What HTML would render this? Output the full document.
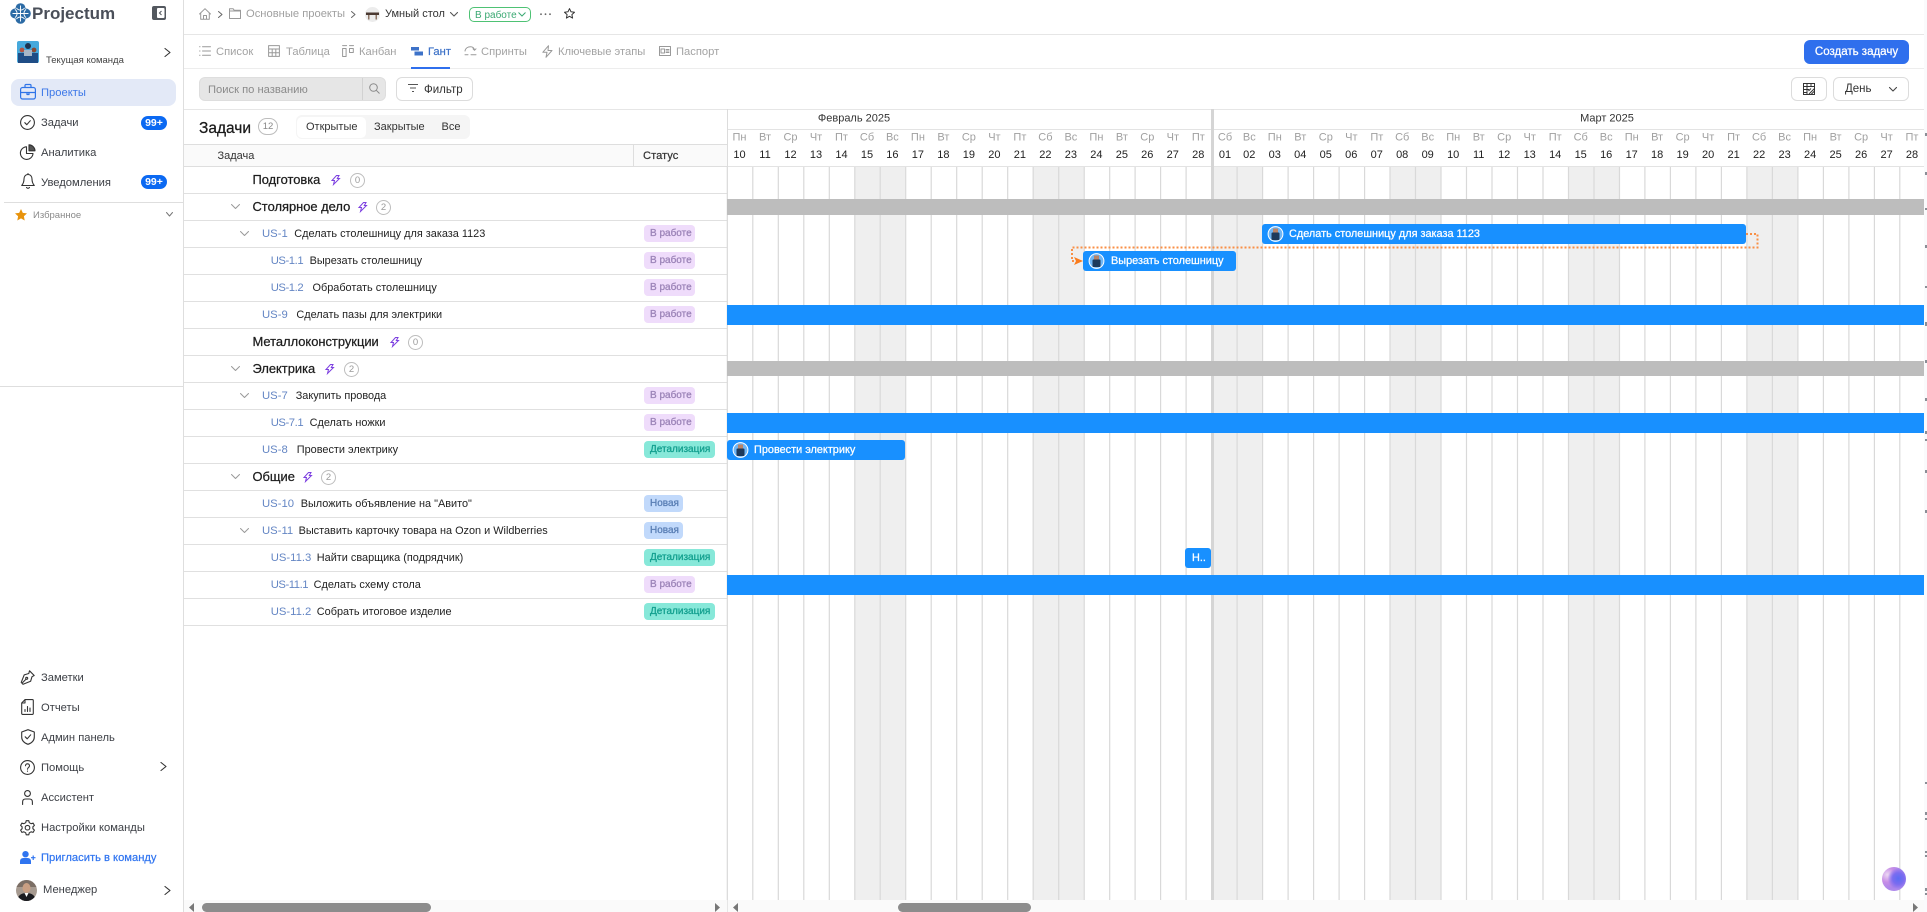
<!DOCTYPE html>
<html lang="ru">
<head>
<meta charset="utf-8">
<title>Projectum</title>
<style>
*{box-sizing:border-box}
html,body{margin:0;padding:0;width:1927px;height:912px;overflow:hidden;background:#fff;font-family:"Liberation Sans","Noto Sans CJK SC",sans-serif;color:#222}
.a{position:absolute}
.t{position:absolute;white-space:nowrap}
svg{position:absolute;overflow:visible;display:block}
.i{fill:none;stroke:#333;stroke-width:1.1;stroke-linecap:round;stroke-linejoin:round}
.g{fill:none;stroke:#999;stroke-width:1;stroke-linecap:round;stroke-linejoin:round}
.n{left:41px;font-size:11.2px;line-height:16px;color:#3c3f45;margin-top:1px}
.tab{font-size:11.2px;top:44px;line-height:16px;color:#a3a3a3}
.r{position:absolute;left:184px;width:543px;height:27px;border-bottom:1px solid #e0e0e0}
.r .t{line-height:26px;top:0}
.l{font-size:12.9px;color:#1d1d1d;-webkit-text-stroke:.25px #1d1d1d}
.x{font-size:10.9px;color:#222}
.d{font-size:11.3px;color:#6486c4}
.q{letter-spacing:-.45px}
.c{position:absolute;top:6px;width:15px;height:15px;border:1px solid #bdbdbd;border-radius:50%;font-size:9.5px;line-height:13px;text-align:center;color:#9a9a9a}
.s{position:absolute;left:460px;top:4px;height:17px;border-radius:4px;font-size:10px;line-height:17px;padding-left:6px;-webkit-text-stroke:.3px}
.w{width:51px;background:#efdcfb;color:#9c84b8}
.z{width:71px;background:#87e8d9;color:#13a08f}
.v{width:39px;background:#c1d9fb;color:#5a7fb5}
.b{position:absolute;height:20px;background:#1890ff;border-radius:3px;color:#fff;font-size:10.9px;line-height:21px;white-space:nowrap;-webkit-text-stroke:.25px #fff}
.f{left:727px;width:1197px;border-radius:0}
.k{position:absolute;left:5px;top:2px;width:17px;height:16px}
.btn{position:absolute;top:77px;height:24px;border:1px solid #dcdcdc;border-radius:6px;background:#fff}
</style>
</head>
<body>

<!-- right strip -->
<div class="a" style="left:1924px;top:0;width:3px;height:912px;background:#fafafc"></div>
<svg style="left:0;top:0" width="1927" height="912"><g fill="#8a8f96">
<rect x="1925" y="133" width="2" height="3"/><rect x="1925" y="172" width="2" height="3"/><rect x="1925" y="208" width="2" height="2"/><rect x="1925" y="245" width="2" height="3"/><rect x="1925" y="286" width="2" height="2"/><rect x="1925" y="322" width="2" height="4"/><rect x="1925" y="360" width="2" height="3"/><rect x="1925" y="398" width="2" height="3"/><rect x="1925" y="431" width="2" height="3"/><rect x="1925" y="439" width="2" height="2"/><rect x="1925" y="470" width="2" height="3"/><rect x="1925" y="510" width="2" height="3"/>
<rect x="1925" y="782" width="2" height="2"/><rect x="1925" y="812" width="2" height="3"/><rect x="1925" y="818" width="2" height="2"/><rect x="1925" y="851" width="2" height="2"/><rect x="1925" y="855" width="2" height="2"/><rect x="1925" y="888" width="2" height="3"/><rect x="1925" y="893" width="2" height="2"/>
</g></svg>

<!-- structural lines -->
<div class="a" style="left:183px;top:0;width:1px;height:912px;background:#dedede"></div>
<div class="a" style="left:184px;top:34px;width:1740px;height:1px;background:#e6e6e6"></div>
<div class="a" style="left:184px;top:68px;width:1740px;height:1px;background:#ededed"></div>
<div class="a" style="left:184px;top:109px;width:1740px;height:1px;background:#e6e6e6"></div>

<!-- ================= SIDEBAR ================= -->
<svg style="left:10px;top:3px" width="21" height="21" viewBox="0 0 22 22">
<g fill="#2c6ba5"><circle cx="11" cy="5.4" r="5.2"/><circle cx="11" cy="16.600" r="5.2"/><circle cx="5.4" cy="11" r="5.2"/><circle cx="16.600" cy="11" r="5.2"/><circle cx="11" cy="11" r="6"/></g>
<g fill="none" stroke="#fff" stroke-width="1" stroke-linecap="round"><path d="M11 3v16M3 11h16"/><path d="M7 5.500c2 2.500 6 2.500 8 0M7 16.500c2-2.500 6-2.500 8 0M5.500 7c2.500 2 2.500 6 0 8M16.500 7c-2.500 2-2.500 6 0 8"/></g>
</svg>
<div class="t" style="left:32px;top:2px;font-size:17px;line-height:24px;font-weight:700;color:#4a4f59">Projectum</div>
<svg style="left:152px;top:6px" width="14" height="14" viewBox="0 0 14 14"><rect width="14" height="14" rx="2" fill="#53585f"/><rect x="5" y="2" width="7.500" height="10" rx="1" fill="#fff"/><path d="M9.500 5L7.500 7l2 2" fill="none" stroke="#53585f" stroke-width="1.100"/></svg>

<svg style="left:17px;top:41px" width="22" height="22" viewBox="0 0 22 22">
<rect width="22" height="22" rx="2" fill="#46a9dc"/>
<circle cx="11" cy="5" r="3" fill="#1d3350"/><circle cx="5" cy="9" r="2.400" fill="#b5523f"/><circle cx="17" cy="9" r="2.400" fill="#8a4a34"/>
<rect x="1" y="12" width="20" height="10" fill="#1f4d86"/><rect x="7" y="9" width="8" height="6" fill="#a7b6c7"/>
</svg>
<div class="t" style="left:46px;top:54px;font-size:9.500px;line-height:14px;color:#444">Текущая команда</div>
<svg style="left:164px;top:48px" width="7" height="9"><path class="i" d="M1 .5l5 4-5 4"/></svg>

<div class="a" style="left:11px;top:79px;width:165px;height:27px;border-radius:8px;background:#e3e9f7"></div>
<svg style="left:20px;top:84px" width="16" height="16" viewBox="0 0 16 16"><g fill="none" stroke="#2f74e8" stroke-width="1.200" stroke-linejoin="round"><rect x=".6" y="3.500" width="14.800" height="11.500" rx="2"/><path d="M5 3.500V1.500q0-1 1-1h4q1 0 1 1v2M.6 8.500h14.800M7 8.500v2h2v-2"/></g></svg>
<div class="t n" style="top:84px;color:#3d78e8">Проекты</div>

<svg style="left:20px;top:114.500px" width="15" height="15" viewBox="0 0 15 15"><circle class="i" cx="7.500" cy="7.500" r="6.900"/><path class="i" d="M4.800 7.700l2 2 3.500-4"/></svg>
<div class="t n" style="top:114px">Задачи</div>
<div class="a" style="left:141px;top:116px;width:26px;height:14px;border-radius:7px;background:#0b69f2;color:#fff;font-size:10.500px;line-height:14px;text-align:center;font-weight:700">99+</div>

<svg style="left:20px;top:144px" width="16" height="16" viewBox="0 0 16 16"><path class="i" d="M6.500 2.800A6.300 6.300 0 1 0 13 9.500H6.500z"/><path class="i" d="M9 .8a6.200 6.200 0 0 1 6 6H9z" style="fill:#555"/></svg>
<div class="t n" style="top:144px">Аналитика</div>

<svg style="left:21px;top:173px" width="14" height="17" viewBox="0 0 14 17"><path class="i" d="M7 1.500C4.500 1.500 3 3.500 3 6c0 3.500-1 5-2.300 6.500h12.600C12 11 11 9.500 11 6c0-2.500-1.500-4.500-4-4.500zM5.500 14.500q1.500 1.500 3 0M7 .5v1"/></svg>
<div class="t n" style="top:174px">Уведомления</div>
<div class="a" style="left:141px;top:175px;width:26px;height:14px;border-radius:7px;background:#0b69f2;color:#fff;font-size:10.500px;line-height:14px;text-align:center;font-weight:700">99+</div>

<div class="a" style="left:4px;top:202px;width:179px;height:1px;background:#dedede"></div>
<svg style="left:15px;top:209px" width="12" height="12" viewBox="0 0 12 12"><path d="M6 0l1.800 3.900 4.200.5-3.100 2.900.8 4.200L6 9.400l-3.700 2.100.8-4.200L0 4.400l4.200-.5z" fill="#e8930c"/></svg>
<div class="t" style="left:33px;top:208.500px;font-size:9.500px;line-height:14px;color:#8a8a8a">Избранное</div>
<svg style="left:166px;top:212px" width="7" height="5"><path class="g" style="stroke:#777" d="M.5.5l3 3.500 3-3.500"/></svg>
<div class="a" style="left:0;top:386px;width:183px;height:1px;background:#dedede"></div>

<svg style="left:20px;top:670px" width="15" height="15" viewBox="0 0 15 15"><path class="i" d="M9.500.8l4.700 4.700-2.200 1.200-1.400 4.600-7.500 3-1.900-1.900 3-7.500 4.600-1.400zM2.200 13l3.500-3.500"/><circle class="i" cx="6.700" cy="8.300" r="1"/></svg>
<div class="t n" style="top:669px">Заметки</div>
<svg style="left:21px;top:699px" width="13" height="16" viewBox="0 0 13 16"><path class="i" d="M4 .6h7.300q1 0 1 1v12.800q0 1-1 1H1.700q-1 0-1-1V4zM4 .6V4H.7M4 12.500v-2M6.500 12.500V7.500M9 12.500v-3.500"/></svg>
<div class="t n" style="top:699px">Отчеты</div>
<svg style="left:21px;top:729px" width="14" height="16" viewBox="0 0 14 16"><path class="i" d="M7 .7l6.300 2.300v5c0 3.500-2.500 6-6.300 7.300C3.200 14 .7 11.500.7 8V3zM4.200 7.800l2 2 3.500-4"/></svg>
<div class="t n" style="top:729px">Админ панель</div>
<svg style="left:20px;top:759.500px" width="15" height="15" viewBox="0 0 15 15"><circle class="i" cx="7.500" cy="7.500" r="6.900"/><path class="i" d="M5.500 5.800c0-2.600 4-2.600 4 0 0 1.700-2 1.700-2 3.400M7.500 11v.3"/></svg>
<div class="t n" style="top:759px">Помощь</div>
<svg style="left:160px;top:762px" width="7" height="9"><path class="i" d="M1 .5l5 4-5 4"/></svg>
<svg style="left:22px;top:790px" width="11" height="15" viewBox="0 0 11 15"><circle class="i" cx="5.500" cy="3.500" r="2.900"/><path class="i" d="M.6 14.500v-2.500q0-3 3-3h3.800q3 0 3 3v2.500"/></svg>
<div class="t n" style="top:789px">Ассистент</div>
<svg style="left:20px;top:819.500px" width="15" height="15" viewBox="0 0 15 15"><path class="i" d="M6.200.7h2.600l.5 2 1.800 1 2-.6 1.300 2.300-1.500 1.400v1.900l1.500 1.400-1.300 2.300-2-.6-1.800 1-.5 2H6.200l-.5-2-1.800-1-2 .6L.6 10.100l1.500-1.400V6.800L.6 5.400l1.300-2.300 2 .6 1.800-1z"/><circle class="i" cx="7.500" cy="7.700" r="2.300"/></svg>
<div class="t n" style="top:819px">Настройки команды</div>
<svg style="left:20px;top:851px" width="16" height="13" viewBox="0 0 16 13"><circle cx="5.500" cy="3.200" r="3.200" fill="#2f74f0"/><path d="M0 13v-2.500q0-3.500 3.500-3.500h4q3.500 0 3.500 3.500V13z" fill="#2f74f0"/><path d="M13.200 4.500v4.500M11 6.700h4.500" stroke="#2f74f0" stroke-width="1.200" fill="none"/></svg>
<div class="t n" style="top:849px;color:#2f74f0;-webkit-text-stroke:.2px #2f74f0">Пригласить в команду</div>

<svg style="left:16px;top:880px" width="21" height="21" viewBox="0 0 21 21"><defs><clipPath id="mg"><circle cx="10.500" cy="10.500" r="10.500"/></clipPath></defs><g clip-path="url(#mg)"><rect width="21" height="21" fill="#a69a90"/><rect y="0" width="21" height="7" fill="#7b6e65"/><ellipse cx="10.500" cy="8" rx="4" ry="5" fill="#c99f83"/><path d="M1 21q1-8 9.500-8t9.500 8z" fill="#1b1c20"/><path d="M8.500 13l2 4 2-4z" fill="#fff"/></g></svg>
<div class="t n" style="left:43px;top:880.500px">Менеджер</div>
<svg style="left:164px;top:886px" width="7" height="9"><path class="i" d="M1 .5l5 4-5 4"/></svg>

<!-- ================= TOP BREADCRUMB ================= -->
<svg style="left:199px;top:8px" width="12" height="12" viewBox="0 0 12 12"><path class="g" d="M.5 6L6 .7 11.500 6M1.700 5v6.300h8.600V5M4.500 11.300V7.500h3v3.800"/></svg>
<svg style="left:218px;top:11px" width="5" height="7"><path class="g" style="stroke:#666" d="M.5.5l3.500 3-3.500 3"/></svg>
<svg style="left:229px;top:8px" width="12" height="11" viewBox="0 0 12 11"><path class="g" d="M.5 10.500V.8h3.700l1 1.500h6.300v8.200zM.5 3h11"/></svg>
<div class="t" style="left:246px;top:6px;font-size:11.200px;line-height:16px;color:#a0a0a0">Основные проекты</div>
<svg style="left:351px;top:11px" width="5" height="7"><path class="g" style="stroke:#666" d="M.5.5l3.500 3-3.500 3"/></svg>
<svg style="left:365px;top:7px" width="15" height="15" viewBox="0 0 15 15"><circle cx="7.500" cy="7.500" r="7.500" fill="#ececec"/><path d="M1 5.500h13v2.500H1z" fill="#4b3a32"/><path d="M3 8h1.500v4.500H3zM10.500 8H12v4.500h-1.500z" fill="#8e7666"/></svg>
<div class="t" style="left:385px;top:6px;font-size:11px;line-height:16px;color:#333">Умный стол</div>
<svg style="left:450px;top:12px" width="8" height="5"><path class="i" style="stroke:#555" d="M.5.5l3.500 3.500 3.500-3.500"/></svg>
<div class="a" style="left:469px;top:7px;width:62px;height:15px;border:1px solid #4ec274;border-radius:5px;background:#fff"></div>
<div class="t" style="left:475px;top:7.500px;font-size:10px;line-height:15px;color:#3aa872">В работе</div>
<svg style="left:518px;top:12px" width="8" height="5"><path fill="none" stroke="#3aa872" stroke-width="1" d="M.5.5l3.500 3.500 3.500-3.500"/></svg>
<svg style="left:540px;top:13px" width="11" height="3"><g fill="#666"><circle cx="1" cy="1.200" r=".9"/><circle cx="5.500" cy="1.200" r=".9"/><circle cx="10" cy="1.200" r=".9"/></g></svg>
<svg style="left:564px;top:8px" width="11" height="11" viewBox="0 0 11 11"><path class="i" style="stroke-width:1" d="M5.500.6l1.500 3.200 3.500.4-2.600 2.400.7 3.500-3.100-1.800-3.100 1.800.7-3.500L.5 4.200 4 3.800z"/></svg>

<!-- ================= TABS ================= -->
<svg style="left:199px;top:46px" width="12" height="10" viewBox="0 0 12 10"><path class="g" d="M3.500.8h8M3.500 5h8M3.500 9.200h8M.6.8h.4M.6 5h.4M.6 9.200h.4"/></svg>
<div class="t tab" style="left:216px">Список</div>
<svg style="left:268px;top:45px" width="12" height="12" viewBox="0 0 12 12"><path class="g" d="M.6.6h10.800v10.800H.6zM.6 4h10.800M.6 7.700h10.800M4.200 4v7.400M7.800 4v7.400"/></svg>
<div class="t tab" style="left:286px">Таблица</div>
<svg style="left:342px;top:45px" width="12" height="12" viewBox="0 0 12 12"><path class="g" d="M.6.6h4M7.500.6h4M.6 3.500h3.500v8H.6zM7.500 3.500h3.800v4H7.500z"/></svg>
<div class="t tab" style="left:359px">Канбан</div>
<svg style="left:411px;top:47px" width="12" height="9" viewBox="0 0 12 9"><path d="M0 0h8v3.500H0zM3.500 4.500H12V8.500H3.500z" fill="#3d72c8"/></svg>
<div class="t tab" style="left:428px;color:#3d72c8;-webkit-text-stroke:.2px #3d72c8">Гант</div>
<div class="a" style="left:411px;top:67px;width:39px;height:2px;background:#2f6fed"></div>
<svg style="left:464px;top:46px" width="13" height="11" viewBox="0 0 13 11"><path class="g" d="M1 5C1.500 2 4 .7 6.500.7S10 2 10.500 4M9 2.800L10.500 4.300 12 2.800M1 8.800h3M7 8.800h5"/></svg>
<div class="t tab" style="left:481px">Спринты</div>
<svg style="left:542px;top:45px" width="11" height="13" viewBox="0 0 11 13"><path class="g" d="M6.500.7L.8 7.300H5l-1 5 6-6.800H6z"/></svg>
<div class="t tab" style="left:558px">Ключевые этапы</div>
<svg style="left:659px;top:46px" width="12" height="10" viewBox="0 0 12 10"><path class="g" d="M.5.5h11v9H.5zM2 3h3.500v4H2zM7 3.500h3M7 5h3M7 6.500h3"/></svg>
<div class="t tab" style="left:676px">Паспорт</div>
<div class="a" style="left:1804px;top:40px;width:105px;height:24px;background:#2f6fed;border-radius:6px;color:#fff;font-size:11.500px;line-height:25px;text-align:center;-webkit-text-stroke:.25px #fff">Создать задачу</div>

<!-- ================= FILTER ROW ================= -->
<div class="a" style="left:199px;top:77px;width:187px;height:24px;background:#e6e6e6;border:1px solid #dedede;border-radius:6px"></div>
<div class="a" style="left:362px;top:78px;width:1px;height:22px;background:#d2d2d2"></div>
<div class="t" style="left:208px;top:82px;font-size:11.200px;line-height:16px;color:#8a8a8a">Поиск по названию</div>
<svg style="left:369px;top:83px" width="11" height="11" viewBox="0 0 11 11"><circle cx="4.500" cy="4.500" r="3.800" fill="none" stroke="#8a8a8a"/><path d="M7.300 7.300l3.200 3.200" stroke="#8a8a8a" fill="none"/></svg>
<div class="btn" style="left:396px;width:77px"></div>
<svg style="left:408px;top:84px" width="10" height="8" viewBox="0 0 10 8"><path d="M0 .5h10M2 4h6M4 7.500h2" stroke="#555" fill="none"/></svg>
<div class="t" style="left:424px;top:82px;font-size:11.500px;line-height:16px;color:#333">Фильтр</div>
<div class="btn" style="left:1791px;width:36px"></div>
<svg style="left:1803px;top:83px" width="12" height="12" viewBox="0 0 12 12"><path d="M.5.5h11v11H.5zM.5 3.500h11M.5 6.500h5.500M.5 9.500h4M4 .5v11M8 .5v3" fill="none" stroke="#333"/><path d="M6 11l5.500-5.500M8 11.500L11.500 8M5.500 8L8 5.500" stroke="#333" fill="none"/></svg>
<div class="btn" style="left:1833px;width:76px"></div>
<div class="t" style="left:1845px;top:80.500px;font-size:11.500px;line-height:16px;color:#333">День</div>
<svg style="left:1889px;top:87px" width="8" height="5"><path class="i" style="stroke:#444" d="M.5.5l3.500 3.500 3.500-3.500"/></svg>

<!-- ================= LEFT TABLE HEADER ================= -->
<div class="t" style="left:199px;top:117.500px;font-size:15.500px;line-height:21px;color:#1a1a1a;-webkit-text-stroke:.25px #1a1a1a">Задачи</div>
<div class="a" style="left:258px;top:118px;width:20px;height:17px;border:1px solid #bdbdbd;border-radius:9px;font-size:9.500px;line-height:15px;text-align:center;color:#888">12</div>
<div class="a" style="left:296px;top:115px;width:174px;height:24px;background:#f5f5f5;border-radius:6px"></div>
<div class="a" style="left:297px;top:116.500px;width:69px;height:21px;background:#fff;border-radius:5px"></div>
<div class="t" style="left:306px;top:119px;font-size:11px;line-height:16px;color:#333">Открытые</div>
<div class="t" style="left:374px;top:119px;font-size:11px;line-height:16px;color:#333">Закрытые</div>
<div class="t" style="left:441.500px;top:119px;font-size:11px;line-height:16px;color:#333">Все</div>
<div class="a" style="left:184px;top:144px;width:543px;height:23px;background:#fafafa;border-top:1px solid #dedede;border-bottom:1px solid #dedede"></div>
<div class="a" style="left:633px;top:145px;width:1px;height:21px;background:#dedede"></div>
<div class="t" style="left:217.500px;top:148px;font-size:11px;line-height:16px;color:#333">Задача</div>
<div class="t" style="left:643px;top:148px;font-size:11.200px;line-height:16px;color:#333;-webkit-text-stroke:.2px #333">Статус</div>

<!-- ================= ROWS ================= -->
<div class="r" style="top:167px"><span class="t l" style="left:68.500px">Подготовка</span>
<svg style="left:147px;top:8px" width="9" height="10" viewBox="0 0 9 10"><path d="M5.500.5H8L6.300 3.500H8.500L2.500 9.500 3.500 5.500H1z" fill="none" stroke="#7c3fe0"/></svg><span class="c" style="left:166px">0</span></div>

<div class="r" style="top:194px"><svg style="left:47px;top:10px" width="9" height="6"><path class="g" d="M.5.5l4 4 4-4"/></svg><span class="t l" style="left:68.500px">Столярное дело</span>
<svg style="left:174px;top:8px" width="9" height="10" viewBox="0 0 9 10"><path d="M5.500.5H8L6.300 3.500H8.500L2.500 9.500 3.500 5.500H1z" fill="none" stroke="#7c3fe0"/></svg><span class="c" style="left:192px">2</span></div>

<div class="r" style="top:221px"><svg style="left:56px;top:10px" width="9" height="6"><path class="g" d="M.5.5l4 4 4-4"/></svg><span class="t d" style="left:78px">US-1</span><span class="t x" style="left:110.300px">Сделать столешницу для заказа 1123</span><span class="s w">В работе</span></div>

<div class="r" style="top:248px"><span class="t d q" style="left:86.700px">US-1.1</span><span class="t x" style="left:125.600px">Вырезать столешницу</span><span class="s w">В работе</span></div>

<div class="r" style="top:275px"><span class="t d q" style="left:86.700px">US-1.2</span><span class="t x" style="left:128.500px">Обработать столешницу</span><span class="s w">В работе</span></div>

<div class="r" style="top:302px"><span class="t d" style="left:78px">US-9</span><span class="t x" style="left:112.400px">Сделать пазы для электрики</span><span class="s w">В работе</span></div>

<div class="r" style="top:329px"><span class="t l" style="left:68.500px">Металлоконструкции</span>
<svg style="left:206px;top:8px" width="9" height="10" viewBox="0 0 9 10"><path d="M5.500.5H8L6.300 3.500H8.500L2.500 9.500 3.500 5.500H1z" fill="none" stroke="#7c3fe0"/></svg><span class="c" style="left:224px">0</span></div>

<div class="r" style="top:356px"><svg style="left:47px;top:10px" width="9" height="6"><path class="g" d="M.5.5l4 4 4-4"/></svg><span class="t l" style="left:68.500px">Электрика</span>
<svg style="left:141px;top:8px" width="9" height="10" viewBox="0 0 9 10"><path d="M5.500.5H8L6.300 3.500H8.500L2.500 9.500 3.500 5.500H1z" fill="none" stroke="#7c3fe0"/></svg><span class="c" style="left:160px">2</span></div>

<div class="r" style="top:383px"><svg style="left:56px;top:10px" width="9" height="6"><path class="g" d="M.5.5l4 4 4-4"/></svg><span class="t d" style="left:78px">US-7</span><span class="t x" style="left:111.700px">Закупить провода</span><span class="s w">В работе</span></div>

<div class="r" style="top:410px"><span class="t d q" style="left:86.700px">US-7.1</span><span class="t x" style="left:125.600px">Сделать ножки</span><span class="s w">В работе</span></div>

<div class="r" style="top:437px"><span class="t d" style="left:78px">US-8</span><span class="t x" style="left:112.800px">Провести электрику</span><span class="s z">Детализация</span></div>

<div class="r" style="top:464px"><svg style="left:47px;top:10px" width="9" height="6"><path class="g" d="M.5.5l4 4 4-4"/></svg><span class="t l" style="left:68.500px">Общие</span>
<svg style="left:119px;top:8px" width="9" height="10" viewBox="0 0 9 10"><path d="M5.500.5H8L6.300 3.500H8.500L2.500 9.500 3.500 5.500H1z" fill="none" stroke="#7c3fe0"/></svg><span class="c" style="left:137px">2</span></div>

<div class="r" style="top:491px"><span class="t d" style="left:78px">US-10</span><span class="t x" style="left:116.700px">Выложить объявление на "Авито"</span><span class="s v">Новая</span></div>

<div class="r" style="top:518px"><svg style="left:56px;top:10px" width="9" height="6"><path class="g" d="M.5.5l4 4 4-4"/></svg><span class="t d" style="left:78px">US-11</span><span class="t x" style="left:114.600px">Выставить карточку товара на Ozon и Wildberries</span><span class="s v">Новая</span></div>

<div class="r" style="top:545px"><span class="t d" style="left:86.700px">US-11.3</span><span class="t x" style="left:132.800px">Найти сварщика (подрядчик)</span><span class="s z">Детализация</span></div>

<div class="r" style="top:572px"><span class="t d q" style="left:86.700px">US-11.1</span><span class="t x" style="left:129.600px">Сделать схему стола</span><span class="s w">В работе</span></div>

<div class="r" style="top:599px"><span class="t d" style="left:86.700px">US-11.2</span><span class="t x" style="left:132.800px">Собрать итоговое изделие</span><span class="s z">Детализация</span></div>

<!-- ================= GANTT ================= -->
<svg style="left:0;top:0" width="1927" height="912" viewBox="0 0 1927 912">
<g fill="#efefef">
<rect x="854.3" y="167" width="51" height="733"/><rect x="1032.7" y="167" width="51" height="733"/><rect x="1211.1" y="167" width="51" height="733"/><rect x="1389.5" y="167" width="51" height="733"/><rect x="1568" y="167" width="51" height="733"/><rect x="1746.4" y="167" width="51" height="733"/>
</g>
<path fill="none" stroke="#d9d9d9" stroke-width="1.2" d="M727.3 166V900M752.800 166V900M778.300 166V900M803.800 166V900M829.300 166V900M854.800 166V900M880.200 166V900M905.700 166V900M931.200 166V900M956.700 166V900M982.200 166V900M1007.700 166V900M1033.200 166V900M1058.700 166V900M1084.200 166V900M1109.700 166V900M1135.100 166V900M1160.600 166V900M1186.100 166V900M1237.100 166V900M1262.600 166V900M1288.100 166V900M1313.600 166V900M1339.100 166V900M1364.600 166V900M1390 166V900M1415.500 166V900M1441 166V900M1466.500 166V900M1492 166V900M1517.500 166V900M1543 166V900M1568.500 166V900M1594 166V900M1619.500 166V900M1644.900 166V900M1670.400 166V900M1695.900 166V900M1721.400 166V900M1746.900 166V900M1772.400 166V900M1797.900 166V900M1823.400 166V900M1848.900 166V900M1874.400 166V900M1899.800 166V900"/>
<path fill="none" stroke="#e3e3e3" d="M727 129.500H1924M727 166.500H1924"/>
<rect x="1211" y="109" width="3" height="791" fill="#d5d5d5"/>
<rect x="727" y="109" width="1" height="791" fill="#dcdcdc"/>
<g font-family="Liberation Sans, sans-serif" font-size="11" fill="#333">
<text x="854" y="121.500" text-anchor="middle">Февраль 2025</text>
<text x="1607" y="121.500" text-anchor="middle">Март 2025</text>
</g>
<g font-family="Liberation Sans, sans-serif" font-size="11" fill="#a0a0a0" text-anchor="middle">
<text x="739.500" y="140.500">Пн</text><text x="765" y="140.500">Вт</text><text x="790.500" y="140.500">Ср</text><text x="816" y="140.500">Чт</text><text x="841.500" y="140.500">Пт</text><text x="867" y="140.500">Сб</text><text x="892.400" y="140.500">Вс</text>
<text x="917.900" y="140.500">Пн</text><text x="943.400" y="140.500">Вт</text><text x="968.900" y="140.500">Ср</text><text x="994.400" y="140.500">Чт</text><text x="1019.900" y="140.500">Пт</text><text x="1045.400" y="140.500">Сб</text><text x="1070.900" y="140.500">Вс</text>
<text x="1096.400" y="140.500">Пн</text><text x="1121.900" y="140.500">Вт</text><text x="1147.300" y="140.500">Ср</text><text x="1172.800" y="140.500">Чт</text><text x="1198.300" y="140.500">Пт</text><text x="1225" y="140.500">Сб</text><text x="1249.300" y="140.500">Вс</text>
<text x="1274.800" y="140.500">Пн</text><text x="1300.300" y="140.500">Вт</text><text x="1325.800" y="140.500">Ср</text><text x="1351.300" y="140.500">Чт</text><text x="1376.800" y="140.500">Пт</text><text x="1402.200" y="140.500">Сб</text><text x="1427.700" y="140.500">Вс</text>
<text x="1453.200" y="140.500">Пн</text><text x="1478.700" y="140.500">Вт</text><text x="1504.200" y="140.500">Ср</text><text x="1529.700" y="140.500">Чт</text><text x="1555.200" y="140.500">Пт</text><text x="1580.700" y="140.500">Сб</text><text x="1606.200" y="140.500">Вс</text>
<text x="1631.700" y="140.500">Пн</text><text x="1657.100" y="140.500">Вт</text><text x="1682.600" y="140.500">Ср</text><text x="1708.100" y="140.500">Чт</text><text x="1733.600" y="140.500">Пт</text><text x="1759.100" y="140.500">Сб</text><text x="1784.600" y="140.500">Вс</text>
<text x="1810.100" y="140.500">Пн</text><text x="1835.600" y="140.500">Вт</text><text x="1861.100" y="140.500">Ср</text><text x="1886.600" y="140.500">Чт</text><text x="1912" y="140.500">Пт</text>
</g>
<g font-family="Liberation Sans, sans-serif" font-size="11" fill="#222" text-anchor="middle">
<text x="739.500" y="158">10</text><text x="765" y="158">11</text><text x="790.500" y="158">12</text><text x="816" y="158">13</text><text x="841.500" y="158">14</text><text x="867" y="158">15</text><text x="892.400" y="158">16</text>
<text x="917.900" y="158">17</text><text x="943.400" y="158">18</text><text x="968.900" y="158">19</text><text x="994.400" y="158">20</text><text x="1019.900" y="158">21</text><text x="1045.400" y="158">22</text><text x="1070.900" y="158">23</text>
<text x="1096.400" y="158">24</text><text x="1121.900" y="158">25</text><text x="1147.300" y="158">26</text><text x="1172.800" y="158">27</text><text x="1198.300" y="158">28</text><text x="1225" y="158">01</text><text x="1249.300" y="158">02</text>
<text x="1274.800" y="158">03</text><text x="1300.300" y="158">04</text><text x="1325.800" y="158">05</text><text x="1351.300" y="158">06</text><text x="1376.800" y="158">07</text><text x="1402.200" y="158">08</text><text x="1427.700" y="158">09</text>
<text x="1453.200" y="158">10</text><text x="1478.700" y="158">11</text><text x="1504.200" y="158">12</text><text x="1529.700" y="158">13</text><text x="1555.200" y="158">14</text><text x="1580.700" y="158">15</text><text x="1606.200" y="158">16</text>
<text x="1631.700" y="158">17</text><text x="1657.100" y="158">18</text><text x="1682.600" y="158">19</text><text x="1708.100" y="158">20</text><text x="1733.600" y="158">21</text><text x="1759.100" y="158">22</text><text x="1784.600" y="158">23</text>
<text x="1810.100" y="158">24</text><text x="1835.600" y="158">25</text><text x="1861.100" y="158">26</text><text x="1886.600" y="158">27</text><text x="1912" y="158">28</text>
</g>
<path d="M1746 234h11.500v13.500H1072v13.500h4" fill="none" stroke="#f98f45" stroke-width="2" stroke-dasharray="2 2"/>
<path d="M1074 257l9 4-9 4 2-4z" fill="#f97c1e"/>
</svg>

<!-- grey summary bars -->
<div class="a" style="left:727px;top:199px;width:1197px;height:16px;background:#bdbdbd"></div>
<div class="a" style="left:727px;top:361px;width:1197px;height:15px;background:#bdbdbd"></div>

<!-- blue bars -->
<div class="b f" style="top:305px"></div>
<div class="b f" style="top:413px"></div>
<div class="b f" style="top:575px"></div>

<div class="b" style="left:1262px;top:224px;width:484px;padding-left:27px">
<svg class="k" viewBox="0 0 17 16"><circle cx="8.500" cy="8" r="7.400" fill="#6fb6f5" stroke="#fff"/><rect x="6" y="2.500" width="5" height="4" fill="#b98468"/><rect x="4.500" y="6.500" width="8" height="7.500" rx="1" fill="#1d3a5c"/></svg>Сделать столешницу для заказа 1123</div>
<div class="b" style="left:1083px;top:251px;width:153px;padding-left:28px">
<svg class="k" viewBox="0 0 17 16"><circle cx="8.500" cy="8" r="7.400" fill="#6fb6f5" stroke="#fff"/><rect x="6" y="2.500" width="5" height="4" fill="#b98468"/><rect x="4.500" y="6.500" width="8" height="7.500" rx="1" fill="#1d3a5c"/></svg>Вырезать столешницу</div>
<div class="b" style="left:727px;top:440px;width:178px;padding-left:27px">
<svg class="k" viewBox="0 0 17 16"><circle cx="8.500" cy="8" r="7.400" fill="#6fb6f5" stroke="#fff"/><rect x="6" y="2.500" width="5" height="4" fill="#b98468"/><rect x="4.500" y="6.500" width="8" height="7.500" rx="1" fill="#1d3a5c"/></svg>Провести электрику</div>
<div class="b" style="left:1185px;top:548px;width:26px;padding-left:7px">Н..</div>

<!-- purple orb -->
<div class="a" style="left:1882px;top:867px;width:24px;height:24px;border-radius:50%;background:radial-gradient(circle at 68% 48%,#5b6cf2 0,#7b6cf0 28%,transparent 52%),radial-gradient(circle at 22% 32%,#ecd8f3 0,#c78ee6 30%,transparent 55%),radial-gradient(circle at 50% 50%,#a173e6 0,#b594ee 100%)"></div>

<!-- scrollbars -->
<div class="a" style="left:184px;top:900px;width:1740px;height:12px;background:#fafafa"></div>
<div class="a" style="left:727px;top:900px;width:1px;height:12px;background:#e6e6e6"></div>
<div class="a" style="left:202px;top:903px;width:229px;height:9px;border-radius:4.500px;background:#8c8c8c"></div>
<div class="a" style="left:898px;top:903px;width:133px;height:9px;border-radius:4.500px;background:#8c8c8c"></div>
<svg style="left:0;top:0" width="1927" height="912"><g fill="#777"><path d="M194 903v9l-5-4.500z"/><path d="M715 903v9l5-4.500z"/><path d="M738 903v9l-5-4.500z"/><path d="M1913 903v9l5-4.500z"/></g></svg>

</body>
</html>
